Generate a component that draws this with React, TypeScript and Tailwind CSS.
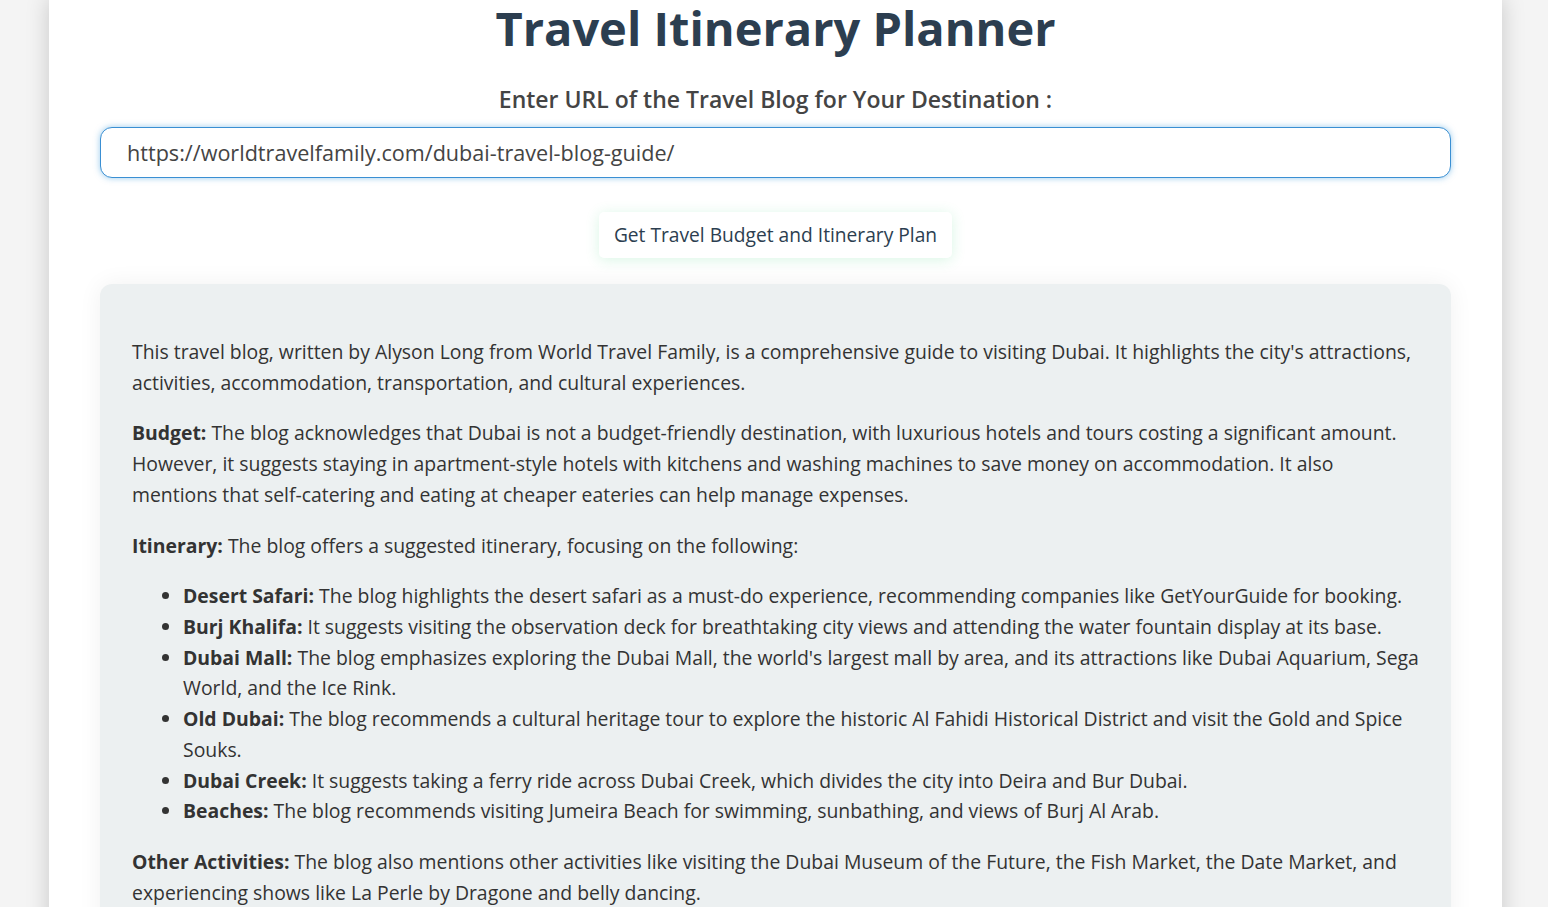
import { useState } from "react";

const highlights = [
  {
    label: "Desert Safari:",
    text: "The blog highlights the desert safari as a must-do experience, recommending companies like GetYourGuide for booking.",
  },
  {
    label: "Burj Khalifa:",
    text: "It suggests visiting the observation deck for breathtaking city views and attending the water fountain display at its base.",
  },
  {
    label: "Dubai Mall:",
    text: "The blog emphasizes exploring the Dubai Mall, the world's largest mall by area, and its attractions like Dubai Aquarium, Sega World, and the Ice Rink.",
  },
  {
    label: "Old Dubai:",
    text: "The blog recommends a cultural heritage tour to explore the historic Al Fahidi Historical District and visit the Gold and Spice Souks.",
  },
  {
    label: "Dubai Creek:",
    text: "It suggests taking a ferry ride across Dubai Creek, which divides the city into Deira and Bur Dubai.",
  },
  {
    label: "Beaches:",
    text: "The blog recommends visiting Jumeira Beach for swimming, sunbathing, and views of Burj Al Arab.",
  },
];

const App = () => {
  const [url, setUrl] = useState("https://worldtravelfamily.com/dubai-travel-blog-guide/");

  return (
    <div className="min-h-screen bg-[#f4f4f4] font-['Open_Sans',sans-serif]">
      <div className="ml-[49px] w-[1453px] min-h-screen bg-white px-[51px] shadow-[0_0_22px_rgba(0,0,0,0.18)]">
        <h1 className="-mt-[2px] text-center text-[47px] font-bold leading-[60px] text-[#2c3e50]">
          Travel Itinerary Planner
        </h1>

        <label className="mt-[25px] block text-center text-[23px] font-semibold leading-[32px] text-[#444]">
          Enter URL of the Travel Blog for Your Destination :
        </label>

        <input
          value={url}
          onChange={(e) => setUrl(e.target.value)}
          className="mt-[12px] block h-[51px] w-full rounded-[12px] border border-[#3a8fd3] bg-white pl-[26px] text-[21.6px] text-[#444] outline-none shadow-[0_0_6px_rgba(52,152,219,0.5)]"
        />

        <div className="mt-[34px] flex justify-center">
          <button className="h-[46px] rounded-[5px] bg-white px-[15px] text-[19.2px] text-[#2c3e50] shadow-[0_2px_14px_rgba(46,204,113,0.18)]">
            Get Travel Budget and Itinerary Plan
          </button>
        </div>

        {/* result */}
        <div className="mt-[26px] rounded-[12px] bg-[#ecf0f1] px-[32px] pt-[33px] pb-[32px] text-[19.4px] leading-[30.72px] text-[#333] shadow-[0_0_24px_rgba(0,0,0,0.06)]">
          <p className="my-[20px]">
            This travel blog, written by Alyson Long from World Travel Family, is a comprehensive guide to visiting Dubai. It highlights the city's attractions, activities, accommodation, transportation, and cultural experiences.
          </p>
          <p className="my-[20px]">
            <strong>Budget:</strong> The blog acknowledges that Dubai is not a budget-friendly destination, with luxurious hotels and tours costing a significant amount. However, it suggests staying in apartment-style hotels with kitchens and washing machines to save money on accommodation. It also mentions that self-catering and eating at cheaper eateries can help manage expenses.
          </p>
          <p className="my-[20px]">
            <strong>Itinerary:</strong> The blog offers a suggested itinerary, focusing on the following:
          </p>
          <ul className="my-[20px] list-disc pl-[51px]">
            {highlights.map((h) => (
              <li key={h.label}>
                <strong>{h.label}</strong> {h.text}
              </li>
            ))}
          </ul>
          <p className="my-[20px]">
            <strong>Other Activities:</strong> The blog also mentions other activities like visiting the Dubai Museum of the Future, the Fish Market, the Date Market, and experiencing shows like La Perle by Dragone and belly dancing.
          </p>
        </div>
      </div>
    </div>
  );
};

export default App;
